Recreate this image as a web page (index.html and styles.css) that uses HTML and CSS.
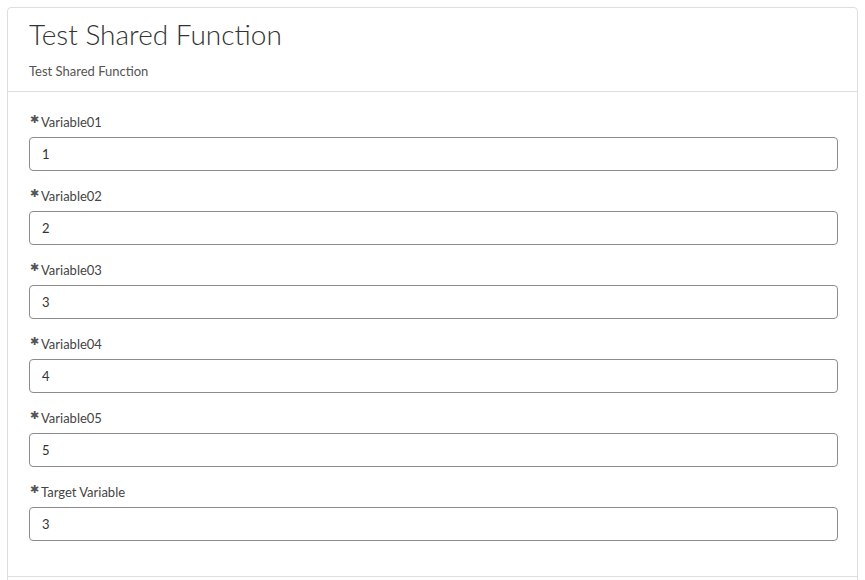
FILE: index.html
```html
<!DOCTYPE html>
<html>
<head>
<meta charset="utf-8">
<link rel="stylesheet" href="styles.css">
</head>
<body>
<div class="card">
  <div class="card-header">
    <h1 class="title">Test Shared Function</h1>
    <div class="subtitle">Test Shared Function</div>
  </div>
  <form class="card-body">
    <div class="field">
      <label class="label"><span class="req">✱</span>Variable01</label>
      <input class="input" type="text" value="1">
    </div>
    <div class="field">
      <label class="label"><span class="req">✱</span>Variable02</label>
      <input class="input" type="text" value="2">
    </div>
    <div class="field">
      <label class="label"><span class="req">✱</span>Variable03</label>
      <input class="input" type="text" value="3">
    </div>
    <div class="field">
      <label class="label"><span class="req">✱</span>Variable04</label>
      <input class="input" type="text" value="4">
    </div>
    <div class="field">
      <label class="label"><span class="req">✱</span>Variable05</label>
      <input class="input" type="text" value="5">
    </div>
    <div class="field">
      <label class="label"><span class="req">✱</span>Target Variable</label>
      <input class="input" type="text" value="3">
    </div>
  </form>
  <div class="card-footer"></div>
</div>
</body>
</html>
```

FILE: styles.css
```css
html, body {
  margin: 0;
  padding: 0;
  background: #fff;
}
body {
  padding: 7px;
  font-family: "Lato", "Open Sans", sans-serif;
  color: #333;
}
.card {
  border: 1px solid #dedede;
  border-radius: 4px;
  background: #fff;
}
.card-header {
  padding: 7px 21px 11px;
  border-bottom: 1px solid #dedede;
}
.title {
  margin: 0;
  font-weight: 300;
  font-size: 28px;
  line-height: 38px;
  color: #333;
}
.subtitle {
  margin-top: 9px;
  font-size: 13px;
  line-height: 18px;
  color: #555;
}
.card-body {
  display: flex;
  flex-direction: column;
  gap: 15px;
  padding: 20px 19px 35px 21px;
  margin: 0;
  border-bottom: 1px solid #dedede;
}
.field {
  display: flex;
  flex-direction: column;
  gap: 5px;
}
.label {
  font-size: 13px;
  line-height: 20px;
  color: #444;
}
.req {
  font-size: 11px;
  vertical-align: top;
  line-height: 14px;
  color: #555;
  margin-left: 1px;
  margin-right: 2px;
}
.input {
  height: 34px;
  box-sizing: border-box;
  border: 1px solid #8c8c8c;
  border-radius: 4px;
  padding: 0 12px;
  font-family: "Lato", "Open Sans", sans-serif;
  font-size: 13px;
  color: #333;
  background: #fff;
  outline: none;
}
.card-footer {
  height: 20px;
}
```
